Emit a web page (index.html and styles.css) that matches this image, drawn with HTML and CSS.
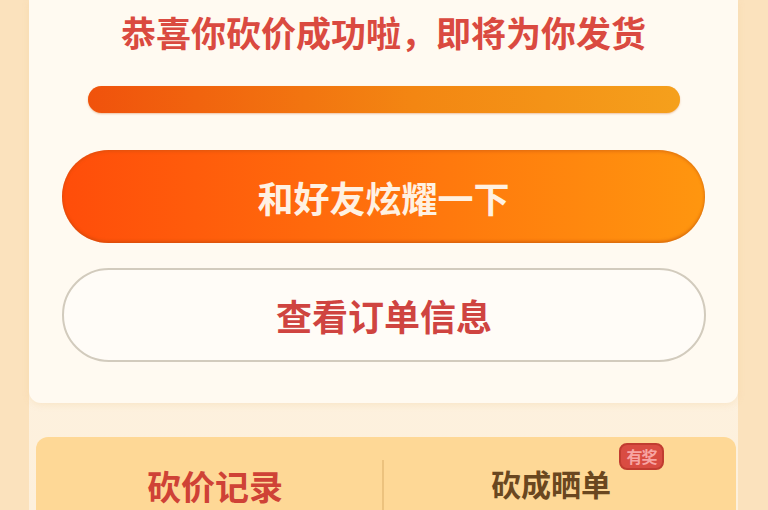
FILE: index.html
```html
<!DOCTYPE html>
<html lang="zh-CN">
<head>
<meta charset="utf-8">
<link rel="stylesheet" href="styles.css">
</head>
<body>
<div class="page">
  <section class="card">
    <h1 class="title">恭喜你砍价成功啦，即将为你发货</h1>
    <div class="progress"><div class="progress-fill"></div></div>
    <button class="btn btn-primary">和好友炫耀一下</button>
    <button class="btn btn-outline">查看订单信息</button>
  </section>
  <section class="tabs">
    <div class="tab tab-left"><span class="tab-label red">砍价记录</span></div>
    <div class="divider"></div>
    <div class="tab tab-right"><span class="tab-label brown">砍成晒单<span class="badge">有奖</span></span></div>
  </section>
</div>
</body>
</html>
```
FILE: styles.css
```css
html, body {
  margin: 0;
  padding: 0;
}
body {
  width: 768px;
  height: 510px;
  overflow: hidden;
  background: #fbe2bd;
  font-family: "Noto Sans CJK SC", "Noto Sans", sans-serif;
}
.page {
  display: flex;
  flex-direction: column;
  margin: 0 30px 0 29px;
  background: linear-gradient(#fdf3e4, #fdf0dc);
  height: 510px;
}
.card {
  background: #fffaf1;
  border-radius: 0 0 12px 12px;
  padding: 14px 0 41px;
  display: flex;
  flex-direction: column;
  box-shadow: 0 2px 6px rgba(240, 200, 140, 0.25);
}
.title {
  margin: 0;
  text-align: center;
  font-size: 35px;
  line-height: 36px;
  font-weight: 700;
  color: #da4a40;
}
.progress {
  margin: 36px 58px 0 59px;
  height: 27px;
  border-radius: 14px;
  background: #f5c890;
  overflow: hidden;
  box-shadow: 0 1px 2px rgba(200, 90, 20, 0.35);
}
.progress-fill {
  height: 100%;
  width: 100%;
  background: linear-gradient(90deg, #f0520c, #f38612 55%, #f5a01c);
}
.btn {
  display: block;
  font-family: inherit;
  font-weight: 700;
  font-size: 36px;
  border-radius: 47px;
  cursor: pointer;
}
.btn-primary {
  margin: 37px 33px 0 33px;
  height: 93px;
  border: none;
  color: #fff1e2;
  background: linear-gradient(90deg, #ff4d0a, #ff6a0c 40%, #ff960f);
  box-shadow: inset 0 -2px 3px rgba(180, 70, 10, 0.45), inset 0 2px 3px rgba(190, 80, 20, 0.35);
}
.btn-outline {
  margin: 25px 32px 0 33px;
  height: 94px;
  border: 2px solid #d2cbbd;
  background: #fffcf7;
  color: #cf4440;
}
.tabs {
  margin: 34px 2px 0 7px;
  flex: 1;
  background: #fed896;
  border-radius: 12px 12px 0 0;
  display: flex;
  align-items: stretch;
}
.tab {
  flex: 1;
  display: flex;
  justify-content: center;
}
.tab-left {
  padding: 29px 0 0 12px;
}
.tab-right {
  padding: 26px 18px 0 0;
}
.divider {
  width: 2px;
  margin-top: 23px;
  background: #ecc27e;
}
.tab-label {
  position: relative;
  font-weight: 700;
  line-height: 40px;
}
.red {
  font-size: 34px;
  color: #cf4236;
}
.brown {
  font-size: 30px;
  color: #6a4720;
}
.badge {
  position: absolute;
  left: 128px;
  top: -20px;
  width: 41px;
  height: 23px;
  border: 2px solid #c13c30;
  border-radius: 8px;
  background: #d94c42;
  color: #f7a5a3;
  font-size: 16px;
  line-height: 23px;
  text-align: center;
  letter-spacing: -1px;
}
```
